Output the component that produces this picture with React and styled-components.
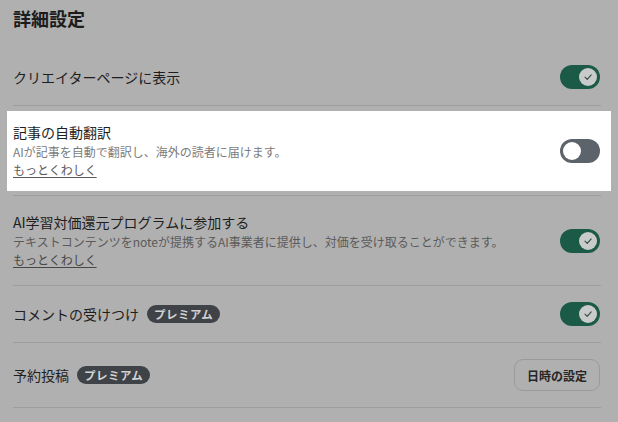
import React from 'react';
import styled, { createGlobalStyle } from 'styled-components';

const Global = createGlobalStyle`
  html, body {
    margin: 0;
    background: #b0b0b0;
  }
  body {
    font-family: "Noto Sans CJK JP", "Noto Sans", sans-serif;
    color: #1e1e1e;
  }
`;

const Page = styled.div`
  padding: 5px 17px 0 13px;
  width: 618px;
  height: 422px;
  box-sizing: border-box;
  overflow: hidden;
`;

const Heading = styled.h2`
  margin: 0 0 18px;
  font-size: 18px;
  line-height: 26px;
  font-weight: 700;
  color: #1c1c1c;
`;

const Row = styled.div`
  padding: 16px 0;
  border-bottom: 1px solid #9d9d9d;
`;

const Inner = styled.div`
  --desc: ${p => (p.$spot ? '#7c7c7c' : '#5a5a5a')};
  --link: ${p => (p.$spot ? '#5a5a5a' : '#474747')};
  display: flex;
  align-items: center;
  justify-content: space-between;
  min-height: 24px;
  background: ${p => (p.$spot ? '#ffffff' : 'transparent')};
  margin: ${p => (p.$spot ? '-11px -10px -12px -6px' : '0')};
  padding: ${p => (p.$spot ? '11px 10px 12px 6px' : '0')};
`;

const Body = styled.div`
  display: flex;
  flex-direction: column;
`;

const TitleLine = styled.div`
  display: flex;
  align-items: center;
  gap: 8px;
`;

const Label = styled.span`
  font-size: 14px;
  line-height: 21px;
  color: #1e1e1e;
`;

const Badge = styled.span`
  display: inline-flex;
  align-items: center;
  height: 18px;
  padding: 0 7px;
  border-radius: 9px;
  background: #3f4347;
  color: #d2d2d2;
  font-size: 11.5px;
  font-weight: 700;
  letter-spacing: 0.5px;
`;

const Desc = styled.div`
  font-size: 12px;
  line-height: 18px;
  color: var(--desc);
`;

const More = styled.a`
  font-size: 12px;
  line-height: 18px;
  color: var(--link);
  text-decoration: underline;
  text-underline-offset: 2px;
  align-self: flex-start;
`;

const Track = styled.div`
  position: relative;
  flex: none;
  width: 40px;
  height: 24px;
  border-radius: 12px;
  background: ${p => (p.$on ? '#1b5a47' : '#5d636a')};
  margin-right: 1px;
`;

const Knob = styled.div`
  position: absolute;
  top: 3px;
  left: ${p => (p.$on ? '19px' : '3px')};
  width: 18px;
  height: 18px;
  border-radius: 50%;
  background: ${p => (p.$on ? '#c9cbca' : '#ffffff')};
  display: flex;
  align-items: center;
  justify-content: center;
`;

const Button = styled.button`
  flex: none;
  height: 32px;
  padding: 0 12px;
  border: 1px solid #9a9a9a;
  border-radius: 9px;
  background: transparent;
  font-family: inherit;
  font-size: 12px;
  font-weight: 700;
  color: #262626;
  margin-right: 1px;
`;

const Toggle = ({ on }) => (
  <Track $on={on}>
    <Knob $on={on}>
      {on && (
        <svg width="10" height="10" viewBox="0 0 10 10">
          <path d="M2 5.2 L4.2 7.3 L8.2 2.8" fill="none" stroke="#2f4a41" strokeWidth="1.1" strokeLinecap="round" strokeLinejoin="round" />
        </svg>
      )}
    </Knob>
  </Track>
);

export default function App() {
  return (
    <Page>
      <Global />
      <Heading>詳細設定</Heading>

      <Row>
        <Inner>
          <Label>クリエイターページに表示</Label>
          <Toggle on />
        </Inner>
      </Row>

      <Row>
        <Inner $spot>
          <Body>
            <Label>記事の自動翻訳</Label>
            <Desc>AIが記事を自動で翻訳し、海外の読者に届けます。</Desc>
            <More>もっとくわしく</More>
          </Body>
          <Toggle on={false} />
        </Inner>
      </Row>

      <Row>
        <Inner>
          <Body>
            <Label>AI学習対価還元プログラムに参加する</Label>
            <Desc>テキストコンテンツをnoteが提携するAI事業者に提供し、対価を受け取ることができます。</Desc>
            <More>もっとくわしく</More>
          </Body>
          <Toggle on />
        </Inner>
      </Row>

      <Row>
        <Inner>
          <TitleLine>
            <Label>コメントの受けつけ</Label>
            <Badge>プレミアム</Badge>
          </TitleLine>
          <Toggle on />
        </Inner>
      </Row>

      <Row>
        <Inner>
          <TitleLine>
            <Label>予約投稿</Label>
            <Badge>プレミアム</Badge>
          </TitleLine>
          <Button>日時の設定</Button>
        </Inner>
      </Row>
    </Page>
  );
}
